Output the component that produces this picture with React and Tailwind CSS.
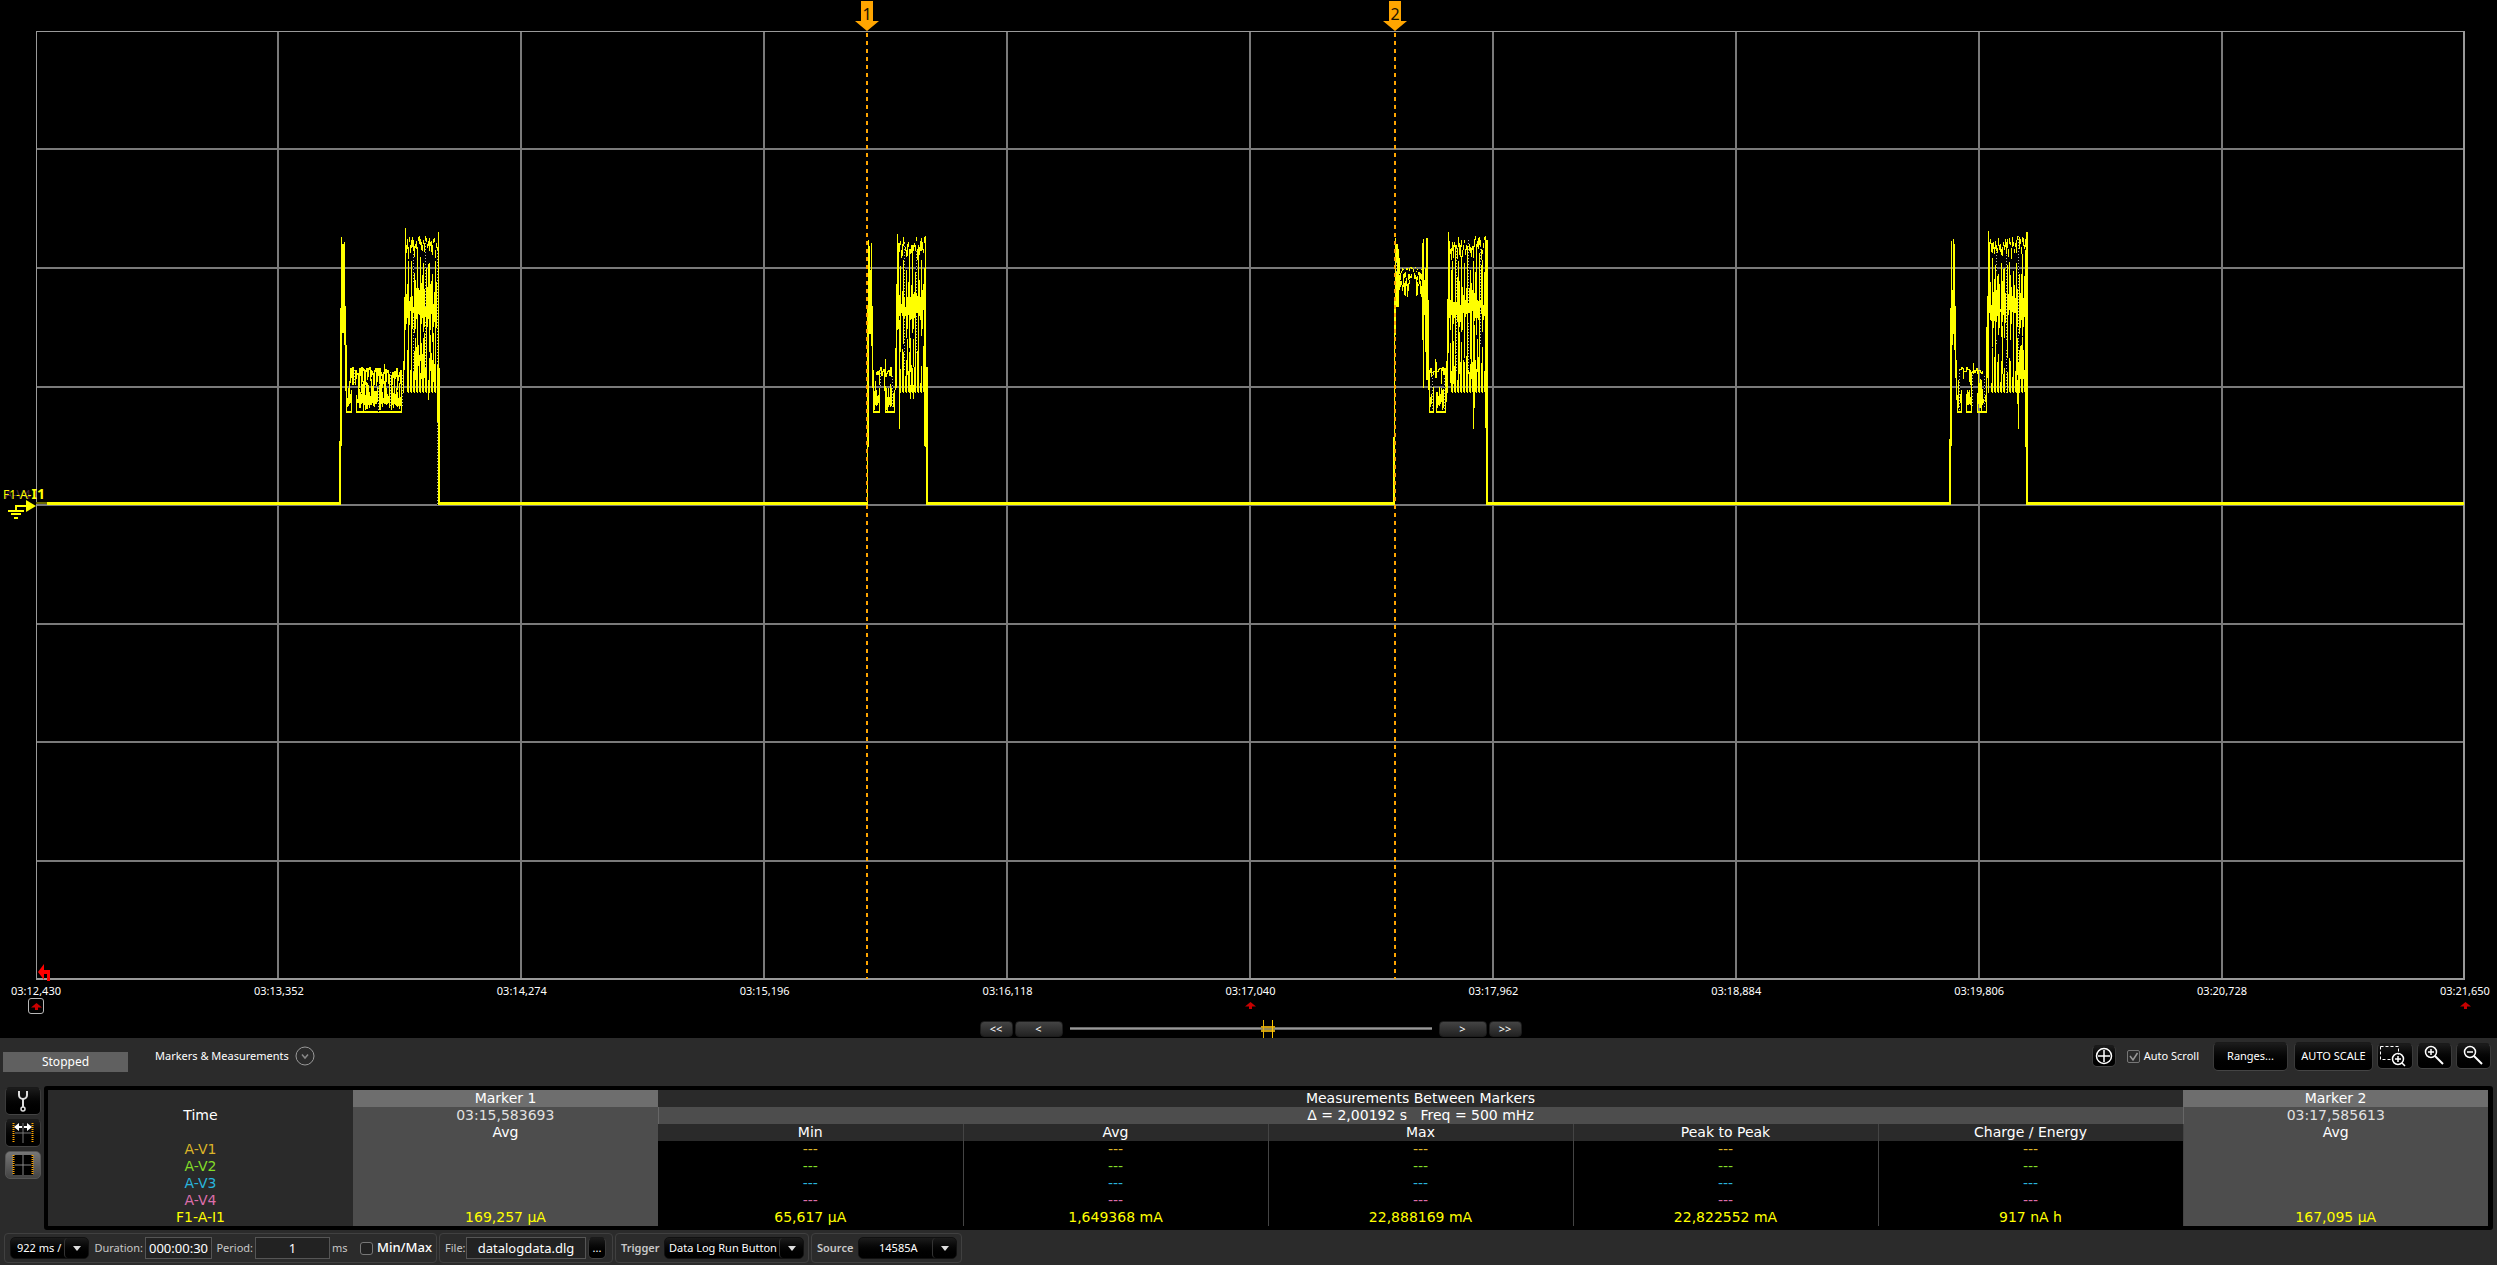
import { useMemo, useState } from "react";

// --- Plot geometry ---
const PLOT = { left: 36, right: 2464, top: 31, bottom: 979 };
const BASELINE = 504;
const V_LINES = [278, 521, 764, 1007, 1250, 1493, 1736, 1979, 2222];
const H_LINES = [149, 268, 387, 505, 624, 742, 861];

const TIMES = [
  "03:12,430", "03:13,352", "03:14,274", "03:15,196", "03:16,118", "03:17,040",
  "03:17,962", "03:18,884", "03:19,806", "03:20,728", "03:21,650",
];

// Each burst: solid strokes [x, y1, y2, width], plus noisy low and high bands
const BURSTS = [
  {
    seed: 7,
    strokes: [
      [339, 441, 505, 2], [340, 308, 446, 2], [341, 237, 333, 1], [342, 244, 333, 2], [344, 242, 345, 1],
      [345, 306, 372, 1], [345, 345, 391, 2], [438, 232, 505, 1], [437, 250, 440, 1], [439, 368, 505, 1],
      [384, 364, 372, 1], [403, 361, 393, 1], [404, 297, 370, 1], [405, 228, 330, 1], [428, 380, 400, 1],
    ],
    low: [[346, 352], [356, 402]],
    arch: [350, 402],
    high: [406, 438],
    dots: [[354, 370, 384], [378, 388, 412], [390, 372, 408], [402, 375, 408], [413, 254, 284], [413, 317, 372], [425, 240, 307], [425, 322, 368], [437, 250, 365], [437, 422, 505]],
  },
  {
    seed: 23,
    strokes: [
      [867, 306, 505, 1], [868, 240, 447, 1], [869, 246, 334, 1], [870, 270, 334, 1], [871, 243, 334, 1],
      [872, 306, 388, 1], [871, 322, 346, 1], [873, 370, 400, 1], [885, 359, 372, 1], [895, 348, 390, 1],
      [896, 284, 388, 1], [897, 234, 330, 1], [898, 243, 329, 1], [899, 320, 429, 1], [924, 320, 446, 1],
      [925, 236, 447, 1], [926, 367, 505, 2], [913, 385, 399, 1], [910, 385, 399, 1],
    ],
    low: [[873, 880], [885, 895]],
    arch: [876, 893],
    high: [899, 925],
    dots: [[880, 370, 386], [892, 376, 409], [904, 243, 297], [904, 318, 370], [916, 251, 292], [916, 316, 353]],
  },
  {
    seed: 41,
    strokes: [
      [1393, 437, 505, 2], [1394, 300, 446, 1], [1395, 238, 335, 1], [1396, 244, 307, 2], [1398, 249, 307, 1],
      [1399, 258, 272, 1], [1422, 243, 340, 1], [1423, 239, 388, 1], [1424, 280, 315, 1], [1425, 268, 352, 1],
      [1426, 238, 380, 2], [1428, 300, 390, 1], [1429, 370, 405, 1], [1435, 359, 378, 1], [1436, 362, 378, 1],
      [1446, 361, 402, 1], [1447, 299, 393, 1], [1448, 232, 353, 1], [1449, 241, 318, 1], [1473, 390, 429, 1],
      [1474, 370, 408, 1], [1485, 236, 428, 1], [1486, 240, 505, 2],
    ],
    plateau: [1399, 1423],
    low: [[1429, 1434], [1436, 1446]],
    arch: [1430, 1446],
    high: [1450, 1486],
    dots: [[1396, 262, 272], [1432, 372, 410], [1444, 378, 410], [1456, 248, 297], [1456, 316, 373], [1468, 240, 303], [1468, 323, 370], [1480, 246, 300], [1480, 307, 345]],
  },
  {
    seed: 59,
    strokes: [
      [1949, 439, 505, 2], [1950, 308, 446, 2], [1951, 241, 340, 1], [1952, 290, 345, 1], [1953, 239, 334, 1],
      [1954, 244, 350, 1], [1955, 306, 378, 1], [1956, 360, 400, 1], [1973, 363, 374, 1], [1986, 327, 400, 1],
      [1987, 296, 378, 1], [1988, 231, 393, 1], [1989, 242, 313, 1], [2017, 380, 404, 1], [2018, 390, 429, 1],
      [2025, 250, 447, 1], [2026, 232, 505, 2],
    ],
    low: [[1957, 1962], [1966, 1972], [1977, 1987]],
    arch: [1959, 1983],
    high: [1990, 2026],
    dots: [[1959, 370, 410], [1972, 375, 408], [1984, 376, 408], [1996, 252, 271], [1996, 340, 345], [2006, 255, 342], [2006, 350, 393], [2018, 236, 362]],
  },
];

// Small deterministic generator so the trace is the same on every render
const makeRandom = (seed) => {
  let s = seed * 7919;
  return (min, max) => {
    s = (s * 1103515245 + 12345) % 2147483648;
    return Math.round(min + (s / 2147483648) * (max - min));
  };
};

const bar = (x, y1, y2, w = 1) => `M${x} ${y1}h${w}V${y2}h${-w}z`;

const buildBurst = ({ seed, strokes, low, arch, high, plateau }) => {
  const rnd = makeRandom(seed);
  const parts = strokes.map((s) => bar(...s));

  // floor blocks of the low section
  low.forEach(([from, to]) => {
    for (let x = from; x < to; x++) {
      const kind = rnd(0, 9);
      if (kind < 6) parts.push(bar(x, rnd(379, 398), rnd(402, 411)));
      else parts.push(bar(x, rnd(386, 400), rnd(403, 408)));
    }
    parts.push(bar(from, 411, 413, to - from));
    parts.push(bar(from, 395, 412), bar(to - 1, 390, 412));
  });

  // ragged upper edge of the low section
  let y = 372;
  for (let x = arch[0]; x < arch[1]; x++) {
    const next = rnd(367, 376);
    const wide = arch[1] - arch[0] > 40;
    const drop = wide ? (x % 3 !== 0 ? rnd(4, 22) : 2) : rnd(0, 9) > 6 ? rnd(8, 22) : 1;
    parts.push(bar(x, Math.min(y, next), Math.max(y, next) + drop));
    y = next;
  }

  // switching noise in the high section
  for (let x = high[0]; x < high[1]; x++) {
    const top = rnd(236, 250);
    parts.push(bar(x, top, top + rnd(3, 13)));
    if (x % 3 === 0) {
      // full-height swing
      parts.push(bar(x, rnd(250, 275), rnd(330, 370)));
      parts.push(bar(x, rnd(335, 375), 393));
    } else if (x % 3 === 1) {
      parts.push(bar(x, rnd(280, 305), rnd(312, 330)));
      if (rnd(0, 9) > 4) parts.push(bar(x, rnd(322, 350), rnd(365, 385)));
    } else {
      parts.push(bar(x, rnd(262, 310), rnd(310, 322)));
      parts.push(bar(x, rnd(345, 384), 392));
    }
  }

  if (plateau) {
    for (let x = plateau[0]; x < plateau[1]; x++) {
      const top = rnd(267, 274);
      parts.push(bar(x, top, top + rnd(1, 3)));
      if (rnd(0, 9) > 3) parts.push(bar(x, rnd(273, 277), rnd(277, 280)));
      if (x < 1410 || x > 1415) parts.push(bar(x, rnd(276, 286), rnd(284, 298)));
    }
  }
  return parts.join("");
};

const MarkerFlag = ({ x, label }) => (
  <g>
    <line x1={x} y1="33" x2={x} y2="979" stroke="#ffa500" strokeWidth="2" strokeDasharray="4 4" />
    <path d={`M${x - 6} 1h12v20h6L${x} 31L${x - 12} 21h6z`} fill="#ffa500" />
    <text x={x} y="20" textAnchor="middle" fontSize="16" fill="#1a1000">{label}</text>
  </g>
);

const Scope = () => {
  const traces = useMemo(() => BURSTS.map(buildBurst), []);
  return (
    <svg viewBox="0 0 2497 984" className="block w-full h-auto font-['Noto_Sans',sans-serif]" role="img" aria-label="Current over time">
      <g shapeRendering="crispEdges">
        {V_LINES.map((x) => <rect key={x} x={x - 1} y={PLOT.top} width="2" height={PLOT.bottom - PLOT.top} fill="#7a7a7a" />)}
        {H_LINES.map((y) => <rect key={y} x={PLOT.left} y={y - 1} width={PLOT.right - PLOT.left} height="2" fill="#7a7a7a" />)}
        <rect x="36" y="31" width="2428" height="1" fill="#9a9a9a" />
        <rect x="36" y="31" width="1" height="948" fill="#9a9a9a" />
        <rect x="2463" y="31" width="2" height="948" fill="#9a9a9a" />
        <rect x="36" y="978" width="2429" height="2" fill="#9a9a9a" />
      </g>

      {/* trace */}
      <g shapeRendering="crispEdges">
        <rect x="36" y="502" width="11" height="2" fill="#6b6b00" />
        <path
          fill="#ffff00"
          d={[[47, 340], [439, 868], [926, 1394], [2026, 2464], [1487, 1950]]
            .map(([a, b]) => bar(a, BASELINE - 2, BASELINE + 1, b - a)).join("")}
        />
        {traces.map((d, i) => <path key={i} d={d} fill="#ffff00" />)}
        {BURSTS.flatMap((b) => b.dots).map(([x, y1, y2]) => (
          <g key={`${x}-${y1}`}>
            <rect x={x} y={y1} width="1" height={y2 - y1} fill="#000" />
            <line x1={x + 0.5} y1={y1} x2={x + 0.5} y2={y2} stroke="#b0b0a0" strokeDasharray="1 2" />
          </g>
        ))}
      </g>

      <MarkerFlag x={867} label="1" />
      <MarkerFlag x={1395} label="2" />

      {/* channel label and ground reference */}
      <text x="5" y="499" fontSize="12" fill="#4a2a40">A-V4</text>
      <text x="3" y="499" fontSize="12" fill="#ffff00">F1-A-<tspan fontWeight="700" fontSize="14">I1</tspan></text>
      <path d="M16 510v-4h12" stroke="#ffff00" strokeWidth="2" fill="none" />
      <path d="M26 500l10 6l-10 6z" fill="#ffff00" />
      <path d="M8 511h16M11 514h10M14 518h4" stroke="#ffff00" strokeWidth="2" />

      {/* trigger position */}
      <path d="M38 972l6 -8v6h6v11h-3v-7h-3v6z" fill="#ff0000" />
    </svg>
  );
};

const UpArrow = () => (
  <svg width="11" height="7" viewBox="0 0 11 7" aria-hidden="true">
    <path d="M5.500 0L11 4.500H7V7H4V4.500H0z" fill="#c80000" />
  </svg>
);

const TimeAxis = () => (
  <div className="pl-9 pr-8">
    <div className="flex justify-between h-3.5 text-[11px] leading-3.5">
      {TIMES.map((t) => <span key={t} className="w-0 flex justify-center whitespace-nowrap">{t}</span>)}
    </div>
    <div className="flex justify-between h-4">
      <span className="w-0 flex justify-center">
        <span className="w-4 h-4 shrink-0 border border-[#b8b8b8] rounded-[3px] flex items-center justify-center"><UpArrow /></span>
      </span>
      <span className="w-0 flex justify-center pt-1 [&>svg]:shrink-0"><UpArrow /></span>
      <span className="w-0 flex justify-center pt-1 [&>svg]:shrink-0"><UpArrow /></span>
    </div>
  </div>
);

const NavButton = ({ children, label, wide }) => (
  <button
    aria-label={label}
    className={`h-4 flex items-center justify-center text-[11px] leading-none rounded-[4px] border border-[#1c1c1c] bg-linear-to-b from-[#444] to-[#222] ${wide ? "w-12" : "w-[33px]"}`}
  >
    {children}
  </button>
);

const ScrollBar = () => {
  const [pos, setPos] = useState(549);
  return (
    <div className="flex justify-center items-center gap-0.5 h-[19px] mt-[5px] pl-1">
      <NavButton label="Page back">&lt;&lt;</NavButton>
      <NavButton label="Step back" wide>&lt;</NavButton>
      <input
        type="range" min="0" max="1000" value={pos} aria-label="Time position"
        onChange={(e) => setPos(Number(e.target.value))}
        className="appearance-none w-[362px] h-[18px] mx-[5px] bg-[linear-gradient(#555,#999,#555)] bg-[length:100%_3px] bg-no-repeat bg-center [&::-webkit-slider-thumb]:appearance-none [&::-webkit-slider-thumb]:w-3.5 [&::-webkit-slider-thumb]:h-[18px] [&::-webkit-slider-thumb]:bg-[linear-gradient(90deg,transparent_2px,#e8b400_2px_3px,transparent_3px_11px,#ffc800_11px_12px,transparent_12px),linear-gradient(transparent_6px,#c89a10_6px_8px,#9a8a50_8px_10px,#c89a10_10px_12px,transparent_12px)]"
      />
      <NavButton label="Step forward" wide>&gt;</NavButton>
      <NavButton label="Page forward">&gt;&gt;</NavButton>
    </div>
  );
};

const ToolButton = ({ className, ...props }) => (
  <button
    className={`flex items-center justify-center rounded-[5px] border border-t-[#1a1a1a] border-x-[#3a3a3a] border-b-[#444] bg-linear-to-b from-[#1c1c1c] to-black text-white ${className}`}
    {...props}
  />
);

const Toolbar = () => (
  <div className="flex justify-between h-12 pl-[3px] pr-1.5">
    <div className="flex">
      <div className="mt-3.5 w-[125px] h-5 bg-[#606060] flex items-center justify-center text-[12px]">Stopped</div>
      <div className="ml-[27px] h-9 flex items-center gap-1.5 text-[11px]">
        Markers &amp; Measurements
        <button aria-label="Choose view">
          <svg width="20" height="20" viewBox="0 0 20 20" fill="none" stroke="#999">
            <circle cx="10" cy="10" r="9" />
            <path d="M7 8.500l3 3.500l3 -3.500" stroke="#888" strokeWidth="1.500" />
          </svg>
        </button>
      </div>
    </div>

    <div className="flex items-center h-9 gap-1 text-[11px]">
      <ToolButton className="w-6 h-[22px]" aria-label="Center">
        <svg width="18" height="18" viewBox="0 0 18 18" fill="none" stroke="#fff" strokeWidth="1.500">
          <circle cx="9" cy="9" r="7.500" />
          <path d="M9 3v12M3 9h12" />
        </svg>
      </ToolButton>
      <label className="flex items-center gap-1 ml-[7px] mr-2.5">
        <input
          type="checkbox" defaultChecked
          className="appearance-none w-[13px] h-[13px] border border-[#777] rounded-[2px] bg-no-repeat bg-center peer"
        />
        <svg width="13" height="13" viewBox="0 0 13 13" className="-ml-[17px] pointer-events-none invisible peer-checked:visible" fill="none" stroke="#999" strokeWidth="1.500">
          <path d="M3 6l3 4l4.500 -7" />
        </svg>
        Auto Scroll
      </label>
      <ToolButton className="w-[75px] h-[29px] mr-0.5">Ranges...</ToolButton>
      <ToolButton className="w-[79px] h-[29px] whitespace-nowrap">AUTO SCALE</ToolButton>
      <ToolButton className="w-9 h-[26px]" aria-label="Zoom region">
        <svg width="32" height="22" viewBox="0 0 32 22" fill="none" stroke="#fff" className="shrink-0">
          <path d="M1.500 1.500h18v8M1.500 1.500v13h11" strokeDasharray="3 2" />
          <circle cx="19" cy="14" r="5.500" strokeWidth="1.500" />
          <path d="M19 11v6M16 14h6M23 18l3 3" strokeWidth="1.500" />
        </svg>
      </ToolButton>
      <ToolButton className="w-[35px] h-[26px]" aria-label="Zoom in">
        <svg width="24" height="24" viewBox="0 0 24 24" fill="none" stroke="#fff" strokeWidth="1.500">
          <circle cx="8" cy="8" r="5.500" />
          <path d="M8 5v6M5 8h6" />
          <path d="M12 12l8 8" strokeWidth="2" />
        </svg>
      </ToolButton>
      <ToolButton className="w-[35px] h-[26px]" aria-label="Zoom out">
        <svg width="24" height="24" viewBox="0 0 24 24" fill="none" stroke="#fff" strokeWidth="1.500">
          <circle cx="8" cy="8" r="5.500" />
          <path d="M5 8h6" />
          <path d="M12 12l8 8" strokeWidth="2" />
        </svg>
      </ToolButton>
    </div>
  </div>
);

const DottedEdges = () => (
  <path d="M3.500 2v20M22.500 2v20" stroke="#ffa500" strokeWidth="2" strokeDasharray="1 1" />
);

const SideButtons = () => (
  <div className="flex flex-col gap-1 pt-px pl-[5px] w-11 shrink-0">
    <ToolButton className="w-9 h-7" aria-label="Settings">
      <svg width="14" height="24" viewBox="0 0 14 24" fill="none" stroke="#ddd" strokeWidth="2">
        <path d="M3 2v4a4 4 0 0 0 8 0v-4M7 10v8" />
        <circle cx="7" cy="20" r="2" strokeWidth="1.500" />
      </svg>
    </ToolButton>
    <ToolButton className="w-9 h-7" aria-label="Show markers">
      <svg width="26" height="24" viewBox="0 0 26 24">
        <path d="M13 2v20M5 12h16" stroke="#777" />
        <DottedEdges />
        <path d="M4 6l5 -4v3h3v2h-3v3zM22 6l-5 -4v3h-3v2h3v3z" fill="#fff" />
      </svg>
    </ToolButton>
    <button aria-label="Measurement grid" className="w-9 h-7 flex items-center justify-center rounded-[5px] border border-[#555] bg-linear-to-b from-[#777] to-[#444]">
      <svg width="26" height="24" viewBox="0 0 26 24">
        <path d="M3 2h20v20h-20z" fill="#000" />
        <path d="M13 2v20M5 12h16" stroke="#888" />
        <DottedEdges />
      </svg>
    </button>
  </div>
);

// --- Measurements table ---
const CHANNELS = [
  { name: "A-V1", color: "text-[#dcb428]" },
  { name: "A-V2", color: "text-[#82dc28]" },
  { name: "A-V3", color: "text-[#28b4dc]" },
  { name: "A-V4", color: "text-[#dc6eaa]" },
];
const COLUMNS = ["Min", "Avg", "Max", "Peak to Peak", "Charge / Energy"];
const VALUES = ["65,617 µA", "1,649368 mA", "22,888169 mA", "22,822552 mA", "917 nA h"];

const Measurements = () => (
  <div className="flex-1 border-4 border-r-[5px] border-black rounded-[3px]">
    <table className="w-full table-fixed border-collapse text-center text-[14px] leading-[17px] font-['Verdana','DejaVu_Sans',sans-serif] [&_th]:font-normal [&_td]:p-0 [&_th]:p-0 [&_tr]:h-[17px]">
      <thead>
        <tr>
          <td className="bg-[#2a2a2a]" />
          <th className="bg-[#6e6e6e]">Marker 1</th>
          <th colSpan={5} className="bg-[#2a2a2a]">Measurements Between Markers</th>
          <th className="bg-[#6e6e6e]">Marker 2</th>
        </tr>
        <tr className="bg-[#4d4d4d]">
          <th className="bg-[#2a2a2a]">Time</th>
          <td className="text-[#e0e0e0]">03:15,583693</td>
          <td colSpan={5} className="border-x border-[#666] whitespace-pre">Δ = 2,00192 s   Freq = 500 mHz</td>
          <td className="text-[#e0e0e0]">03:17,585613</td>
        </tr>
        <tr className="bg-[#2a2a2a]">
          <td />
          <th className="bg-[#4d4d4d]">Avg</th>
          {COLUMNS.map((c) => <th key={c} className="border-r border-[#444]">{c}</th>)}
          <th className="bg-[#4d4d4d]">Avg</th>
        </tr>
      </thead>
      <tbody className="bg-black">
        {CHANNELS.map((ch) => (
          <tr key={ch.name} className={ch.color}>
            <th className="bg-[#2a2a2a]">{ch.name}</th>
            <td className="bg-[#4d4d4d]" />
            {COLUMNS.map((c) => <td key={c} className="border-r border-[#444]">---</td>)}
            <td className="bg-[#4d4d4d]" />
          </tr>
        ))}
        <tr className="text-[#ffff00]">
          <th className="bg-[#2a2a2a]">F1-A-I1</th>
          <td className="bg-[#4d4d4d]">169,257 µA</td>
          {VALUES.map((v) => <td key={v} className="border-r border-[#444]">{v}</td>)}
          <td className="bg-[#4d4d4d]">167,095 µA</td>
        </tr>
      </tbody>
    </table>
  </div>
);

// --- Bottom settings bar ---
const Group = ({ children, className }) => (
  <div className={`flex items-center h-[30px] border border-[#404040] rounded-[4px] pl-[5px] ${className}`}>{children}</div>
);

const SelectBox = ({ value, label, id, className }) => (
  <div className={`relative h-[22px] shrink-0 rounded-[5px] border border-[#111] bg-linear-to-b from-[#1c1c1c] to-black ${className}`}>
    <select id={id} aria-label={label} className="appearance-none w-full h-full pr-6 pl-1.5 text-[11px] text-white bg-transparent">
      <option>{value}</option>
    </select>
    <span className="absolute right-0 top-0 h-full w-6 border-l border-[#333] rounded-[4px] flex items-center justify-center pointer-events-none">
      <svg width="8" height="5" viewBox="0 0 8 5"><path d="M0 0h8l-4 5z" fill="#ddd" /></svg>
    </span>
  </div>
);

const field = "h-[22px] shrink-0 border border-[#555] bg-[#222] text-center text-white";

const SettingsBar = () => (
  <div className="flex gap-0.5 pl-1 pt-[3px] pb-px text-[11px] text-[#c8c8c8]">
    <Group className="w-[433px]">
      <SelectBox value="922 ms /" label="Time per division" className="w-[79px]" />
      <label htmlFor="duration" className="w-14 shrink-0 text-right pr-0.5">Duration:</label>
      <input id="duration" defaultValue="000:00:30" className={`${field} w-[67px] text-[13px]`} />
      <label htmlFor="period" className="w-[43px] shrink-0 text-right pr-0.5">Period:</label>
      <input id="period" defaultValue="1" className={`${field} w-[75px] text-[13px]`} />
      <span className="ml-0.5 w-7 shrink-0">ms</span>
      <label className="flex items-center gap-1 text-[13px] font-medium text-white whitespace-nowrap">
        <input type="checkbox" className="appearance-none w-[13px] h-[13px] shrink-0 border border-[#777] rounded-[3px] bg-[#222]" />
        Min/Max
      </label>
    </Group>
    <Group className="w-[174px]">
      <label htmlFor="file" className="w-[21px]">File:</label>
      <input id="file" defaultValue="datalogdata.dlg" className={`${field} w-[120px] text-[13px]`} />
      <ToolButton className="w-[18px] h-[22px] ml-0.5 shrink-0" aria-label="Browse">...</ToolButton>
    </Group>
    <Group className="w-[194px]">
      <label htmlFor="trigger" className="w-[43px] font-semibold">Trigger</label>
      <SelectBox id="trigger" value="Data Log Run Button" className="w-[140px] [&>select]:pl-1" />
    </Group>
    <Group className="w-[151px]">
      <label htmlFor="source" className="w-[41px] font-semibold">Source</label>
      <SelectBox id="source" value="14585A" className="w-[99px] [&>select]:pl-5" />
    </Group>
  </div>
);

const App = () => (
  <div className="min-h-screen flex flex-col bg-black text-white font-['Noto_Sans',sans-serif]">
    <Scope />
    <TimeAxis />
    <ScrollBar />
    <div className="flex-1 bg-[#2b2b2b]">
      <Toolbar />
      <div className="flex pr-1">
        <SideButtons />
        <Measurements />
      </div>
      <SettingsBar />
    </div>
  </div>
);

export default App;
